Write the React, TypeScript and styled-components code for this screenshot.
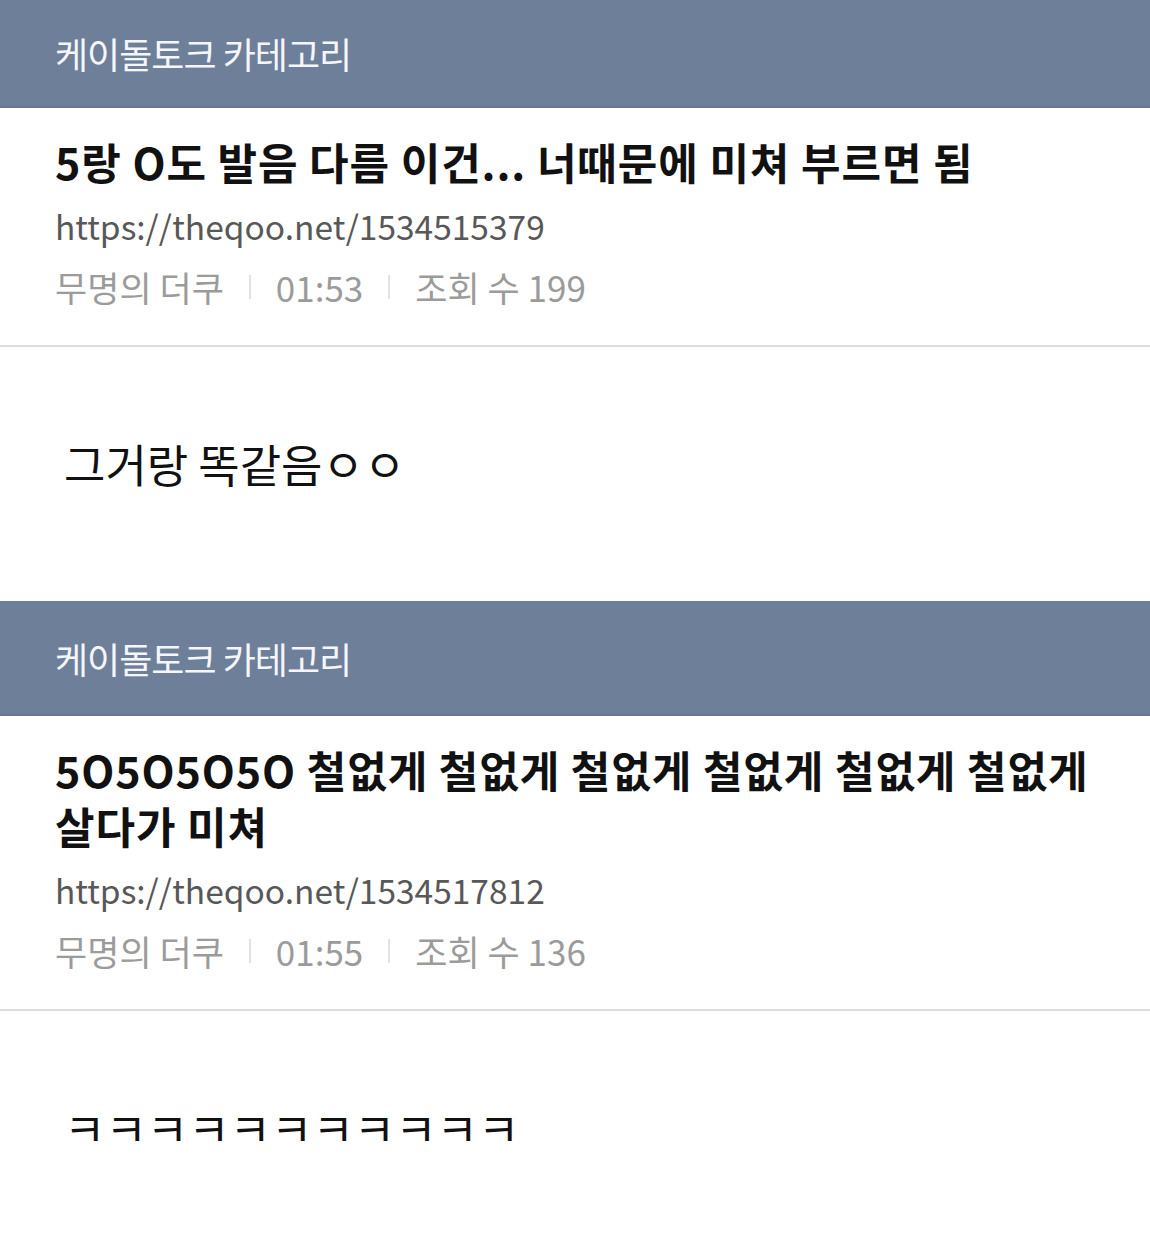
import React from 'react';
import styled, { createGlobalStyle } from 'styled-components';

interface Post {
  headerHeight: number;
  title: string;
  url: string;
  author: string;
  time: string;
  views: number;
  comment: string;
}

const posts: Post[] = [
  {
    headerHeight: 108,
    title: '5랑 O도 발음 다름 이건... 너때문에 미쳐 부르면 됨',
    url: 'https://theqoo.net/1534515379',
    author: '무명의 더쿠',
    time: '01:53',
    views: 199,
    comment: '그거랑 똑같음ㅇㅇ'
  },
  {
    headerHeight: 115,
    title: '5O5O5O5O 철없게 철없게 철없게 철없게 철없게 철없게 살다가 미쳐',
    url: 'https://theqoo.net/1534517812',
    author: '무명의 더쿠',
    time: '01:55',
    views: 136,
    comment: 'ㅋㅋㅋㅋㅋㅋㅋㅋㅋㅋㅋ'
  }
];

const App: React.FC = () => {
  return (
    <>
      <GlobalStyle />
      <Page>
        {posts.map((post) => (
          <Block key={post.url}>
            <CategoryBar height={post.headerHeight}>케이돌토크 카테고리</CategoryBar>
            <PostInfo>
              <Title>{post.title}</Title>
              <Url>{post.url}</Url>
              <Meta>
                <span>{post.author}</span>
                <Sep />
                <span>{post.time}</span>
                <Sep />
                <span>조회 수 {post.views}</span>
              </Meta>
            </PostInfo>
            <Comment>
              <CommentText>{post.comment}</CommentText>
            </Comment>
          </Block>
        ))}
      </Page>
    </>
  );
};

export default App;

const GlobalStyle = createGlobalStyle`
  html, body {
    margin: 0;
    padding: 0;
    background: #ffffff;
  }
  body {
    font-family: "Noto Sans CJK KR", "Noto Sans", sans-serif;
    overflow: hidden;
  }
`;

const Page = styled.div`
  width: 1150px;
  height: 1259px;
  overflow: hidden;
  background: #ffffff;
`;

const Block = styled.section`
  display: flex;
  flex-direction: column;
`;

const CategoryBar = styled.div<{ height: number }>`
  height: ${(p) => p.height}px;
  box-sizing: border-box;
  display: flex;
  align-items: center;
  padding-left: 55px;
  background: #6e7f9a;
  border-bottom: 2px solid #67778f;
  color: #f4f6f9;
  font-size: 36px;
  font-weight: 400;
  letter-spacing: -1px;
`;

const PostInfo = styled.div`
  padding: 25px 40px 38px 55px;
  border-bottom: 2px solid #dddddd;
`;

const Title = styled.div`
  font-size: 43px;
  line-height: 56px;
  font-weight: 700;
  letter-spacing: 0.9px;
  color: #111111;
  word-break: keep-all;
`;

const Url = styled.div`
  margin-top: 17px;
  font-size: 33.5px;
  line-height: 40px;
  color: #585858;
`;

const Meta = styled.div`
  margin-top: 21px;
  display: flex;
  align-items: center;
  font-size: 35px;
  line-height: 40px;
  color: #9b9b9b;
`;

const Sep = styled.i`
  display: block;
  width: 2px;
  height: 24px;
  margin: 0 25px;
  background: #e2e2e2;
`;

const Comment = styled.div`
  height: 254px;
  box-sizing: border-box;
  padding: 92px 0 0 64px;
`;

const CommentText = styled.div`
  font-size: 45px;
  line-height: 50px;
  color: #111111;
`;
